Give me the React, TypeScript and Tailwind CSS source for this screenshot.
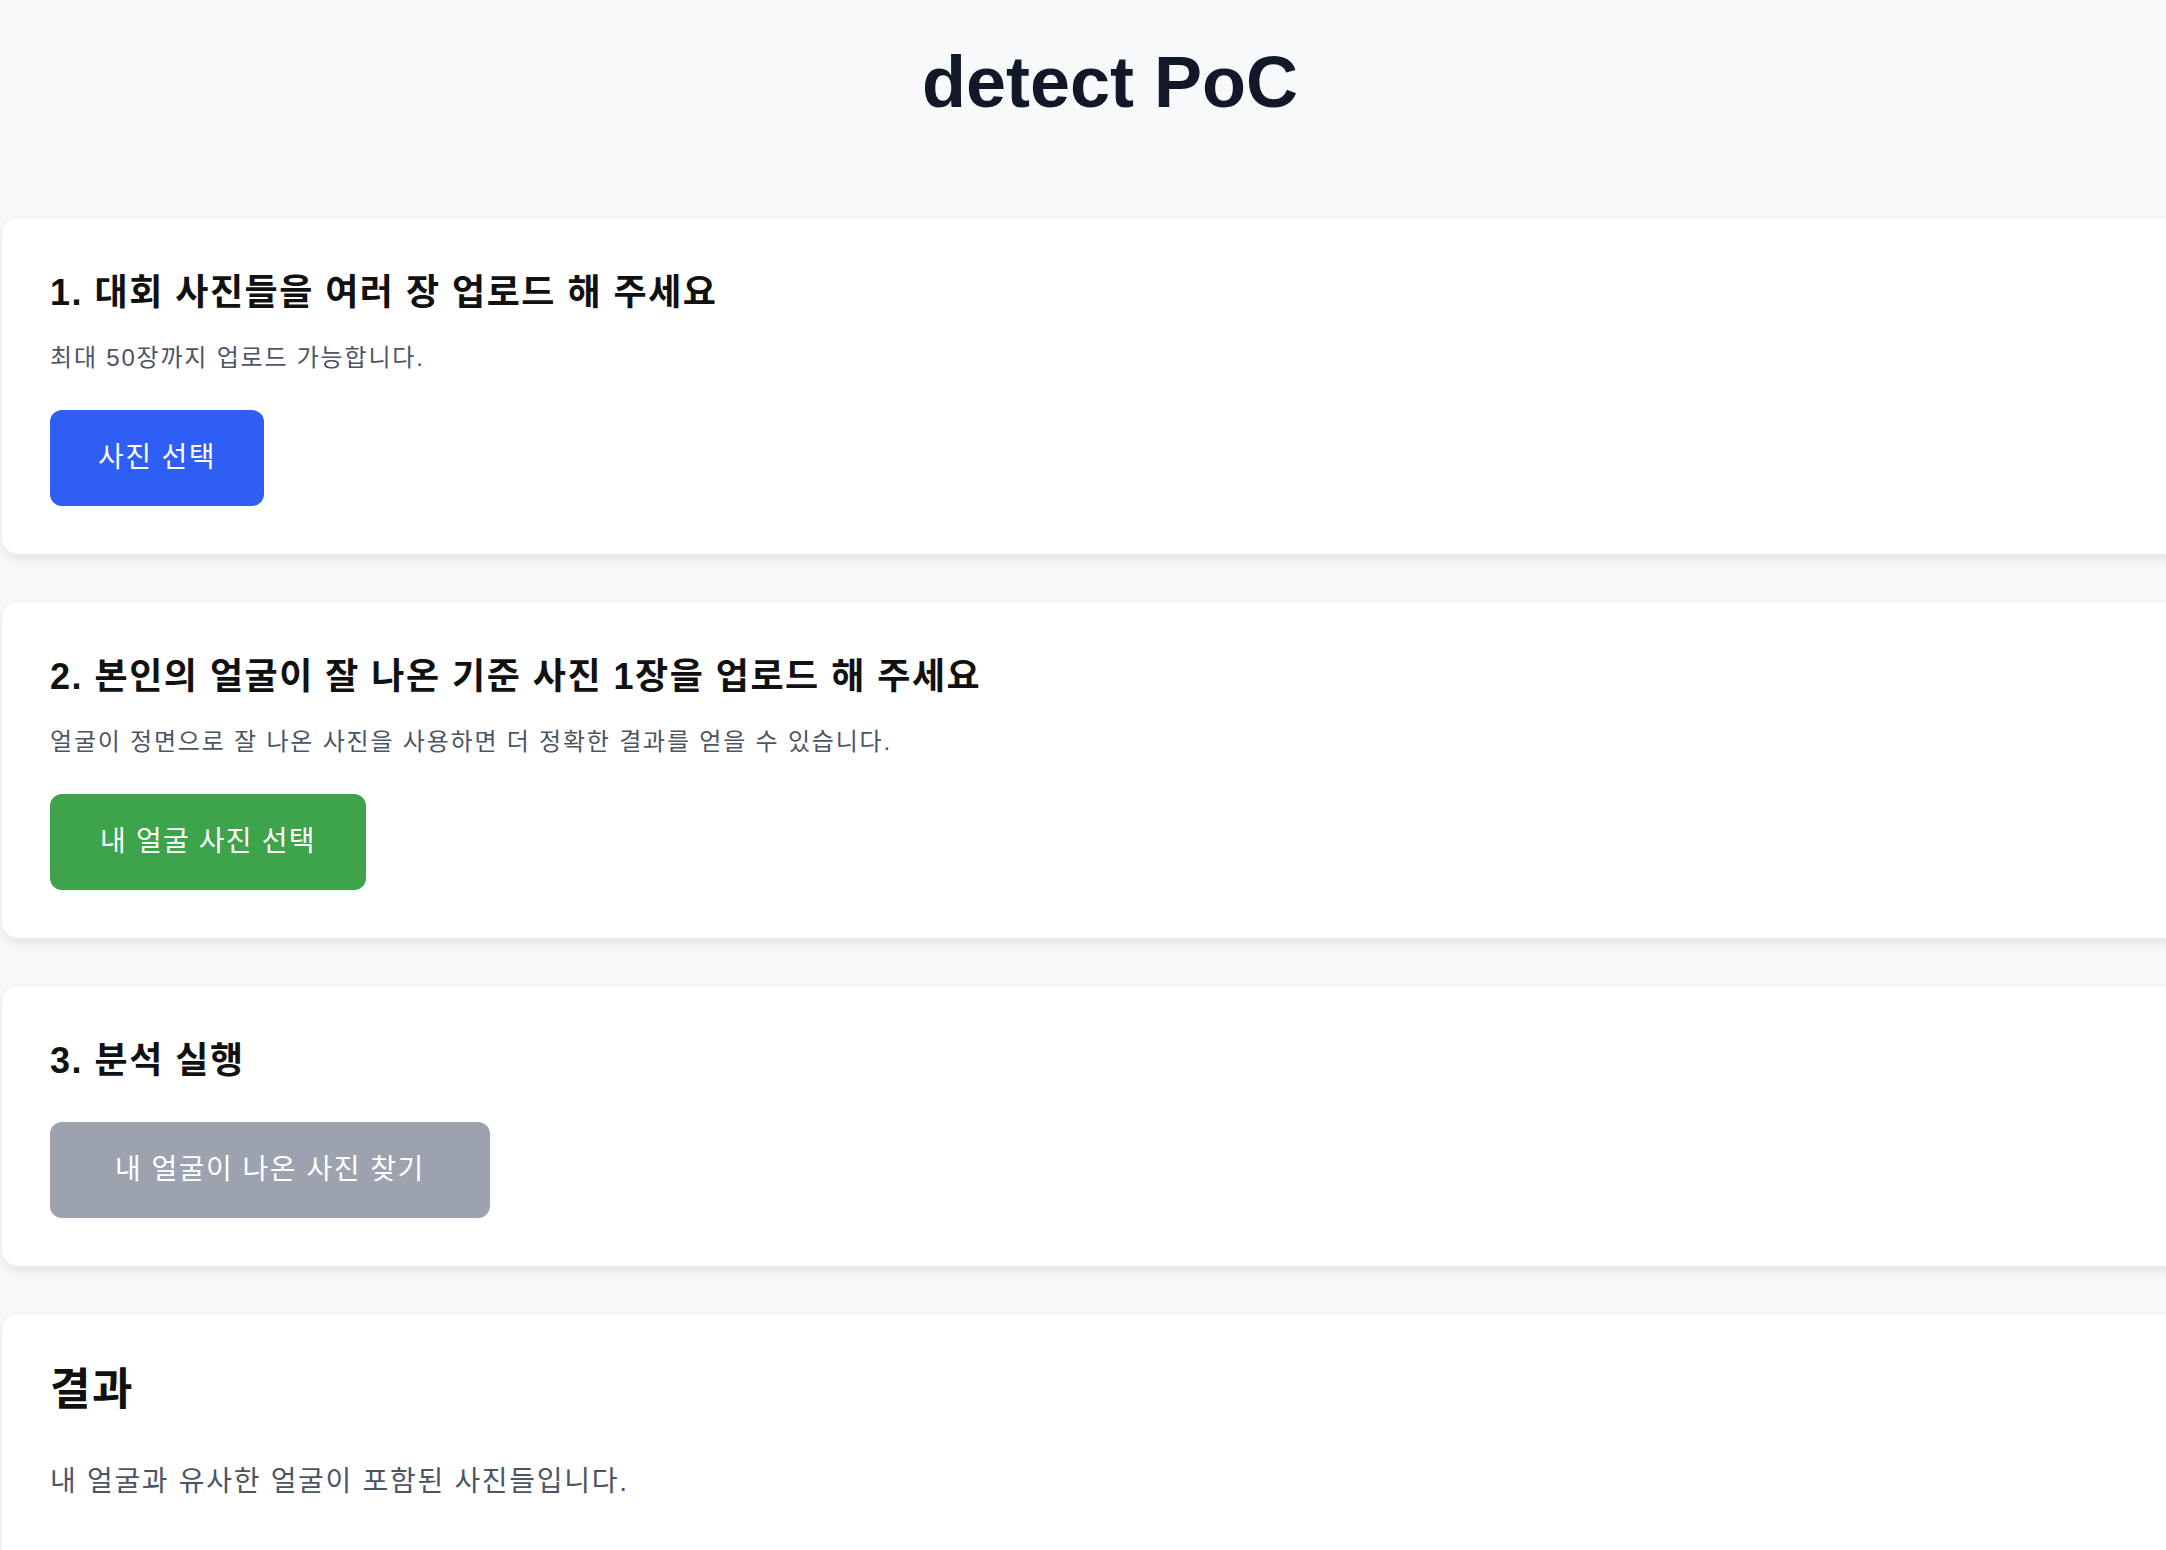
import React from "react";

const font = "font-['Liberation_Sans','Noto_Sans_CJK_KR',sans-serif]";

function Card({ children }: { children: React.ReactNode }) {
  return (
    <section className="mb-[48px] rounded-2xl bg-white p-[48px] shadow-[0_5px_14px_rgba(0,0,0,0.09)]">
      {children}
    </section>
  );
}

function Heading({ children }: { children: React.ReactNode }) {
  return (
    <h2 className="text-[36px] leading-[54px] font-bold tracking-[1.5px] text-[#111111]">
      {children}
    </h2>
  );
}

function Hint({ children }: { children: React.ReactNode }) {
  return (
    <p className="mt-[20px] text-[24px] leading-[36px] tracking-[1.8px] text-[#4b5563]">
      {children}
    </p>
  );
}

export default function App() {
  return (
    <div className={`min-h-screen overflow-hidden bg-[#f8f9fa] ${font}`}>
      <div className="ml-[2px] w-[2216px]">
        <h1 className="pt-[46px] mb-[100px] text-center text-[72px] leading-[72px] font-bold text-[#111827]">
          detect PoC
        </h1>

        <Card>
          <Heading>1. 대회 사진들을 여러 장 업로드 해 주세요</Heading>
          <Hint>최대 50장까지 업로드 가능합니다.</Hint>
          <button className="mt-[34px] h-[96px] rounded-[12px] bg-[#2f5ef4] px-[48px] text-[28px] tracking-[1.4px] text-white">
            사진 선택
          </button>
        </Card>

        <Card>
          <Heading>2. 본인의 얼굴이 잘 나온 기준 사진 1장을 업로드 해 주세요</Heading>
          <Hint>얼굴이 정면으로 잘 나온 사진을 사용하면 더 정확한 결과를 얻을 수 있습니다.</Hint>
          <button className="mt-[34px] h-[96px] rounded-[12px] bg-[#3ea44c] px-[50px] text-[28px] tracking-[1.2px] text-white">
            내 얼굴 사진 선택
          </button>
        </Card>

        <Card>
          <Heading>3. 분석 실행</Heading>
          <button
            disabled
            className="mt-[34px] h-[96px] rounded-[12px] bg-[#9ca3af] px-[65px] text-[28px] tracking-[1.5px] text-white"
          >
            내 얼굴이 나온 사진 찾기
          </button>
        </Card>

        <Card>
          <h2 className="text-[44px] leading-[56px] font-bold tracking-[1.5px] text-[#111111]">결과</h2>
          <p className="mt-[43px] text-[28px] leading-[42px] tracking-[1.7px] text-[#4b5563]">
            내 얼굴과 유사한 얼굴이 포함된 사진들입니다.
          </p>
          <div className="h-[200px]" />
        </Card>
      </div>
    </div>
  );
}
